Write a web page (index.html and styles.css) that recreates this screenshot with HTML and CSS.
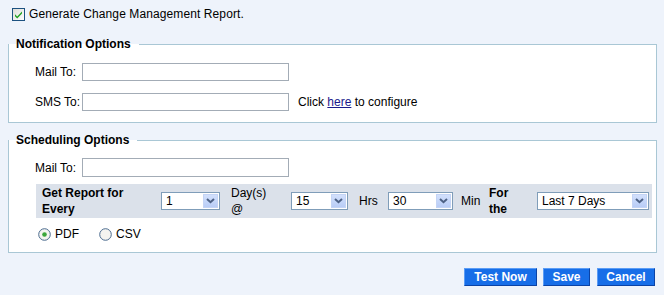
FILE: index.html
```html
<!DOCTYPE html>
<html>
<head>
  <meta charset="utf-8">
  <title>Change Management Report</title>
  <link rel="stylesheet" href="styles.css">
</head>
<body>
  <div class="top">
    <label class="check">
      <svg class="box" width="13" height="13" viewBox="0 0 13 13">
        <defs>
          <linearGradient id="cbg" x1="0" y1="0" x2="1" y2="1">
            <stop offset="0" stop-color="#dcdcd6"/>
            <stop offset="1" stop-color="#ffffff"/>
          </linearGradient>
        </defs>
        <rect x="0.5" y="0.5" width="12" height="12" fill="url(#cbg)" stroke="#1c5180"/>
        <path d="M3 6.2 L5.2 8.6 L10 3.6 L10 5.6 L5.2 10.6 L3 8.2 Z" fill="#21a121"/>
      </svg>
      Generate Change Management Report.
    </label>
  </div>

  <fieldset class="group">
    <legend>Notification Options</legend>
    <div class="group-body">
      <div class="row first">
        <label class="lbl">Mail To:</label>
        <input class="text" type="text">
      </div>
      <div class="row">
        <label class="lbl">SMS To:</label>
        <input class="text" type="text">
        <span class="hint">Click <a href="#">here</a> to configure</span>
      </div>
    </div>
  </fieldset>

  <fieldset class="group sched">
    <legend>Scheduling Options</legend>
    <div class="group-body">
      <div class="row first">
        <label class="lbl">Mail To:</label>
        <input class="text" type="text">
      </div>

      <div class="every">
        <div class="bold">Get Report for<br>Every</div>
        <div class="combo w59"><span>1</span><i class="arrow"><svg width="9" height="6" viewBox="0 0 9 6"><path d="M1 1 L4.5 4.2 L8 1" fill="none" stroke="#4d6185" stroke-width="2"/></svg></i></div>
        <div>Day(s)<br>@</div>
        <div class="combo w57"><span>15</span><i class="arrow"><svg width="9" height="6" viewBox="0 0 9 6"><path d="M1 1 L4.5 4.2 L8 1" fill="none" stroke="#4d6185" stroke-width="2"/></svg></i></div>
        <div>Hrs</div>
        <div class="combo w65"><span>30</span><i class="arrow"><svg width="9" height="6" viewBox="0 0 9 6"><path d="M1 1 L4.5 4.2 L8 1" fill="none" stroke="#4d6185" stroke-width="2"/></svg></i></div>
        <div>Min</div>
        <div class="bold">For<br>the</div>
        <div class="combo w112"><span>Last 7 Days</span><i class="arrow"><svg width="9" height="6" viewBox="0 0 9 6"><path d="M1 1 L4.5 4.2 L8 1" fill="none" stroke="#4d6185" stroke-width="2"/></svg></i></div>
      </div>

      <div class="formats">
        <label class="radio">
          <svg width="13" height="13" viewBox="0 0 13 13">
            <circle cx="6.5" cy="6.5" r="5.8" fill="#f4f4f0" stroke="#4c6c8f"/>
            <circle cx="6.5" cy="6.5" r="2.3" fill="#3aa63a"/>
          </svg>
          PDF
        </label>
        <label class="radio">
          <svg width="13" height="13" viewBox="0 0 13 13">
            <circle cx="6.5" cy="6.5" r="5.8" fill="#f4f4f0" stroke="#4c6c8f"/>
          </svg>
          CSV
        </label>
      </div>
    </div>
  </fieldset>

  <div class="actions">
    <button class="btn w73">Test Now</button>
    <button class="btn w47">Save</button>
    <button class="btn w58">Cancel</button>
  </div>
</body>
</html>
```

FILE: styles.css
```css
* { box-sizing: border-box; }

body {
  margin: 0;
  background-color: #eef3fb;
  font-family: "Liberation Sans", Arial, sans-serif;
  font-size: 12px;
  color: #000;
}

.top {
  padding: 8px 0 0 12px;
  height: 21px;
}

.check {
  display: flex;
  align-items: center;
  gap: 4px;
  line-height: 13px;
  letter-spacing: 0.1px;
}

.group {
  margin: 15px 7px 0 8px;
  padding: 0 0 11px 0;
  border: 1px solid #a9c7d5;
  background-color: #fff;
  min-width: 0;
}
.group.sched {
  margin-top: 9px;
  padding-bottom: 10px;
}

.group legend {
  font-weight: bold;
  line-height: 16px;
  padding: 0 8px 0 7px;
  margin-left: 0;
}

.group-body {
  padding-left: 26px;
}

.row {
  display: flex;
  align-items: center;
  height: 18px;
  margin-top: 12px;
}
.row.first { margin-top: 11px; }
.sched .row.first { margin-top: 10px; height: 19px; }

.lbl {
  width: 47px;
}

.text {
  width: 207px;
  height: 18px;
  border: 1px solid #a3acb6;
  background: #fff;
  padding: 0 3px;
  font: inherit;
  margin: 0;
}
.sched .text { height: 19px; }

.hint {
  margin-left: 9px;
}
.hint a {
  color: #1a1a8c;
}

.every {
  display: grid;
  grid-template-columns: 119px 70px 60px 68px 29px 73px 28px 48px 112px;
  align-items: center;
  height: 34px;
  margin: 7px 4px 0 1px;
  padding-left: 6px;
  background-color: #dbe1ea;
  line-height: 16px;
}

.bold { font-weight: bold; }

.combo {
  position: relative;
  height: 18px;
  border: 1px solid #7f9db9;
  background: #fff;
  line-height: 16px;
  padding-left: 4px;
}
.w59 { width: 59px; }
.w57 { width: 57px; }
.w65 { width: 65px; }
.w112 { width: 112px; }

.combo .arrow {
  position: absolute;
  top: 1px;
  right: 1px;
  width: 15px;
  height: 14px;
  background: linear-gradient(#d2e0fc, #b9cdf6);
  border: 1px solid #c4d4f5;
  display: flex;
  align-items: center;
  justify-content: center;
}

.formats {
  display: flex;
  align-items: center;
  height: 16px;
  margin-top: 8px;
  padding-left: 3px;
}

.radio {
  display: flex;
  align-items: center;
  gap: 4px;
  margin-right: 20px;
}

.actions {
  display: flex;
  justify-content: flex-end;
  gap: 6px;
  margin-top: 15px;
  padding-right: 9px;
}

.btn {
  height: 18px;
  padding: 0;
  background-color: #176ee8;
  color: #fff;
  font-family: "Liberation Sans", Arial, sans-serif;
  font-size: 12px;
  font-weight: bold;
  border: 1px solid;
  border-color: #5b9cf5 #0b43a6 #0b43a6 #5b9cf5;
  cursor: pointer;
}
.w73 { width: 73px; }
.w47 { width: 47px; margin-right: 1px; }
.w58 { width: 58px; }
```
